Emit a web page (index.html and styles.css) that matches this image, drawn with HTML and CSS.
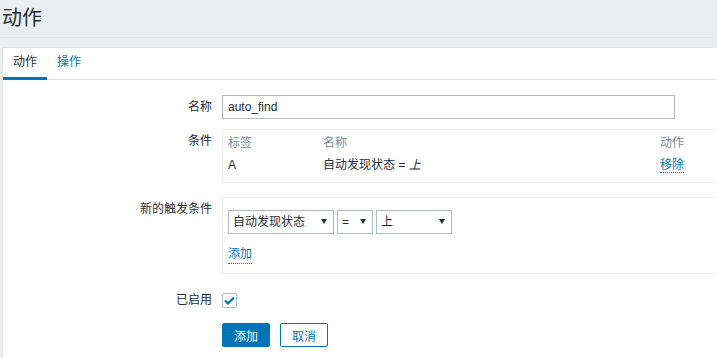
FILE: index.html
```html
<!DOCTYPE html>
<html lang="zh-CN">
<head>
  <meta charset="UTF-8" />
  <meta name="viewport" content="width=device-width, initial-scale=1.0"/>
  <title>动作</title>
  <link rel="stylesheet" href="styles.css">
</head>
<body>
  <header class="page-title">
    <h1>动作</h1>
  </header>

  <div class="panel">
    <ul class="tabs">
      <li><a class="tab active">动作</a></li>
      <li><a class="tab" href="#">操作</a></li>
    </ul>

    <form class="form-list">
      <div class="form-row">
        <label class="form-label" for="name">名称</label>
        <div class="form-field">
          <input type="text" id="name" class="text-input" value="auto_find">
        </div>
      </div>

      <div class="form-row spaced">
        <div class="form-label">条件</div>
        <div class="form-field wide">
          <div class="box conditions">
            <table>
              <tr>
                <th class="col-tag">标签</th>
                <th class="col-name">名称</th>
                <th>动作</th>
              </tr>
              <tr>
                <td>A</td>
                <td>自动发现状态 = <em>上</em></td>
                <td><a class="link" href="#">移除</a></td>
              </tr>
            </table>
          </div>
        </div>
      </div>

      <div class="form-row spaced">
        <div class="form-label">新的触发条件</div>
        <div class="form-field wide">
          <div class="box new-condition">
            <div class="selects">
              <div class="select w-type">
                <select><option>自动发现状态</option></select>
              </div>
              <div class="select w-op">
                <select><option>=</option></select>
              </div>
              <div class="select w-value">
                <select><option>上</option></select>
              </div>
            </div>
            <a class="link add-link" href="#">添加</a>
          </div>
        </div>
      </div>

      <div class="form-row tight">
        <div class="form-label">已启用</div>
        <div class="form-field">
          <span class="checkbox">
            <svg width="11" height="9" viewBox="0 0 11 9"><path d="M1 4.5 L4 7.5 L10 1.5" fill="none" stroke="#0275b8" stroke-width="2.2"/></svg>
          </span>
        </div>
      </div>

      <div class="form-row">
        <div class="form-label"></div>
        <div class="form-field buttons">
          <button type="submit" class="btn primary">添加</button>
          <button type="button" class="btn alt">取消</button>
        </div>
      </div>
    </form>
  </div>
</body>
</html>
```

FILE: styles.css
```css
html, body {
  height: 100%;
  overflow: hidden;
}

body {
  margin: 0;
  display: flex;
  flex-direction: column;
  background-color: #ebeef0;
  color: #1f2c33;
  font-family: "Liberation Sans", "Noto Sans CJK SC", sans-serif;
  font-size: 12px;
}

.page-title {
  height: 37px;
  flex-shrink: 0;
  border-bottom: 1px solid #dfe4e7;
  margin-bottom: 9px;
}

.page-title h1 {
  margin: 0;
  padding-left: 2px;
  font-size: 20px;
  font-weight: normal;
  line-height: 37px;
}

.panel {
  flex: 1;
  margin-left: 2px;
  background: #fff;
  border: 1px solid #dfe4e7;
  border-right: none;
  border-bottom: none;
}

.tabs {
  display: flex;
  list-style: none;
  margin: 0;
  padding: 0;
  border-bottom: 1px solid #dfe4e7;
}

.tab {
  display: block;
  padding: 0 10px;
  height: 29px;
  line-height: 29px;
  border-bottom: 3px solid transparent;
  margin-bottom: -1px;
  color: #0275b8;
  text-decoration: none;
}

.tab.active {
  color: #1f2c33;
  border-bottom-color: #0275b8;
}

.form-list {
  padding-top: 15px;
}

.form-row {
  display: flex;
  margin-bottom: 10px;
}

.form-row.spaced {
  margin-bottom: 14px;
}

.form-row.tight {
  margin-bottom: 11px;
}

.form-label {
  box-sizing: border-box;
  width: 219px;
  padding-right: 10px;
  text-align: right;
  line-height: 24px;
  flex-shrink: 0;
}

.form-field {
  line-height: 24px;
}

.form-field.wide {
  flex: 1;
}

.text-input {
  box-sizing: border-box;
  width: 453px;
  height: 24px;
  margin: 0;
  padding: 0 5px;
  border: 1px solid #acbbc2;
  font-family: inherit;
  font-size: 12px;
  color: #1f2c33;
}

.box {
  border: 1px solid #ebeef0;
  border-right: none;
}

.conditions {
  padding: 3px 5px 7px;
}

.conditions table {
  border-collapse: collapse;
  width: 100%;
}

.conditions th {
  text-align: left;
  font-weight: normal;
  color: #768d99;
  line-height: 20px;
  padding: 0;
}

.conditions td {
  line-height: 20px;
  padding: 2px 0 0;
}

.col-tag {
  width: 95px;
}

.col-name {
  width: 337px;
}

.link {
  color: #0275b8;
  text-decoration: none;
  border-bottom: 1px dotted #0275b8;
}

.new-condition {
  padding: 12px 5px 9px;
  line-height: 18px;
}

.selects {
  display: flex;
  gap: 3px;
}

.select {
  position: relative;
  height: 24px;
}

.select select {
  box-sizing: border-box;
  width: 100%;
  height: 24px;
  margin: 0;
  padding: 0 16px 0 4px;
  border: 1px solid #acbbc2;
  border-radius: 0;
  background: #fff;
  color: #1f2c33;
  font-family: inherit;
  font-size: 12px;
  -webkit-appearance: none;
  appearance: none;
}

.select::after {
  content: "";
  position: absolute;
  right: 7px;
  top: 9px;
  border-left: 3px solid transparent;
  border-right: 3px solid transparent;
  border-top: 5px solid #1f2c33;
  pointer-events: none;
}

.w-type { width: 106px; }
.w-op { width: 36px; }
.w-value { width: 76px; }

.add-link {
  display: inline-block;
  margin-top: 12px;
  line-height: 17px;
}

.checkbox {
  box-sizing: border-box;
  display: inline-flex;
  align-items: center;
  justify-content: center;
  width: 15px;
  height: 15px;
  margin-top: 5px;
  border: 1px solid #acbbc2;
  border-radius: 2px;
  vertical-align: top;
}

.buttons {
  display: flex;
  gap: 10px;
}

.btn {
  box-sizing: border-box;
  width: 48px;
  height: 24px;
  padding: 0;
  border: 1px solid #0275b8;
  border-radius: 2px;
  font-family: inherit;
  font-size: 12px;
  cursor: pointer;
}

.btn.primary {
  background-color: #0275b8;
  color: #fff;
}

.btn.alt {
  background-color: #fff;
  color: #0275b8;
}
```
